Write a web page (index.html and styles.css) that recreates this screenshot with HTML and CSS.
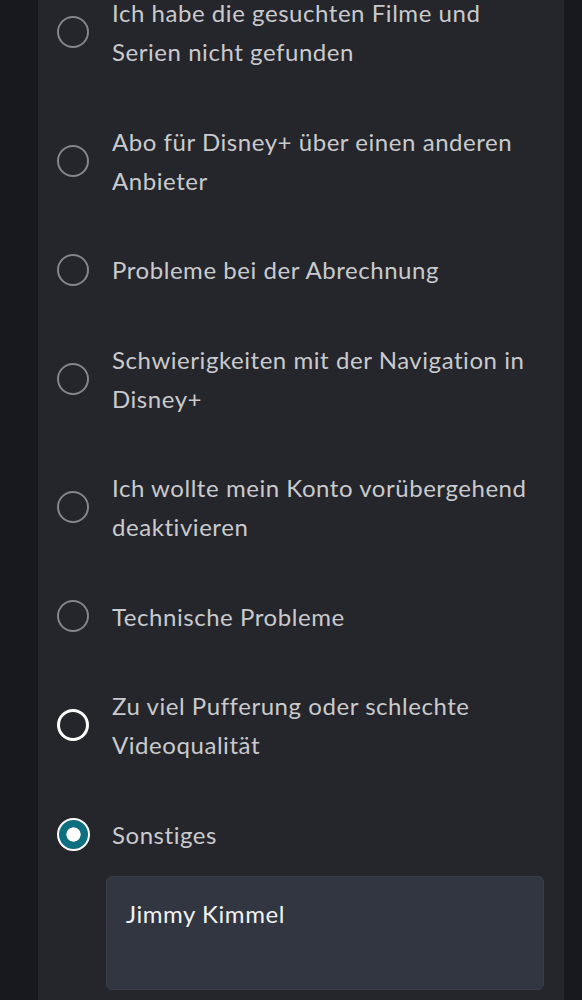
FILE: index.html
```html
<!DOCTYPE html>
<html lang="de">
<head>
<meta charset="utf-8">
<link rel="stylesheet" href="styles.css">
</head>
<body>
<div class="shell">
  <div class="panel">
    <ul class="options">
      <li class="option"><span class="radio"></span><span class="label">Ich habe die gesuchten Filme und Serien nicht gefunden</span></li>
      <li class="option"><span class="radio"></span><span class="label">Abo für Disney+ über einen anderen Anbieter</span></li>
      <li class="option"><span class="radio"></span><span class="label">Probleme bei der Abrechnung</span></li>
      <li class="option"><span class="radio"></span><span class="label">Schwierigkeiten mit der Navigation in Disney+</span></li>
      <li class="option"><span class="radio"></span><span class="label">Ich wollte mein Konto vorübergehend deaktivieren</span></li>
      <li class="option"><span class="radio"></span><span class="label">Technische Probleme</span></li>
      <li class="option"><span class="radio radio-focus"></span><span class="label">Zu viel Pufferung oder schlechte Videoqualität</span></li>
      <li class="option"><span class="radio radio-checked"></span><span class="label">Sonstiges</span></li>
    </ul>
    <div class="textbox">Jimmy Kimmel</div>
  </div>
</div>
</body>
</html>
```
FILE: styles.css
```css
html, body {
  margin: 0;
  padding: 0;
  background: #18191e;
  height: 100%;
  overflow: hidden;
}
.shell {
  display: flex;
  justify-content: flex-start;
  padding-left: 38px;
  height: 100%;
}
.panel {
  width: 526px;
  background: #25262b;
  height: 100%;
  padding: 0 20px 0 19px;
  box-sizing: border-box;
  font-family: "Lato", "Liberation Sans", sans-serif;
}
.options {
  list-style: none;
  margin: -7px 0 0 0;
  padding: 0;
  display: flex;
  flex-direction: column;
  gap: 50.5px;
}
.option {
  display: flex;
  align-items: center;
  gap: 23px;
}
.radio {
  flex: none;
  width: 32px;
  height: 32px;
  box-sizing: border-box;
  border-radius: 50%;
  border: 2px solid #85868c;
}
.radio-focus {
  border: 3px solid #ffffff;
}
.radio-checked {
  width: 33px;
  height: 33px;
  margin-left: -0.5px;
  margin-right: -0.5px;
  border: 2px solid #ffffff;
  background: radial-gradient(circle, #ffffff 0 6.8px, #0e6f80 7.4px);
}
.label {
  color: #c9cacd;
  font-size: 24px;
  line-height: 39px;
  letter-spacing: 0.55px;
}
.textbox {
  margin: 22px 0 0 49px;
  height: 114px;
  box-sizing: border-box;
  background: #313641;
  border: 1px solid #383d48;
  border-radius: 6px;
  padding: 17px 19px;
  color: #f2f2f4;
  font-size: 24px;
  line-height: 39px;
  letter-spacing: 0.55px;
}
```
